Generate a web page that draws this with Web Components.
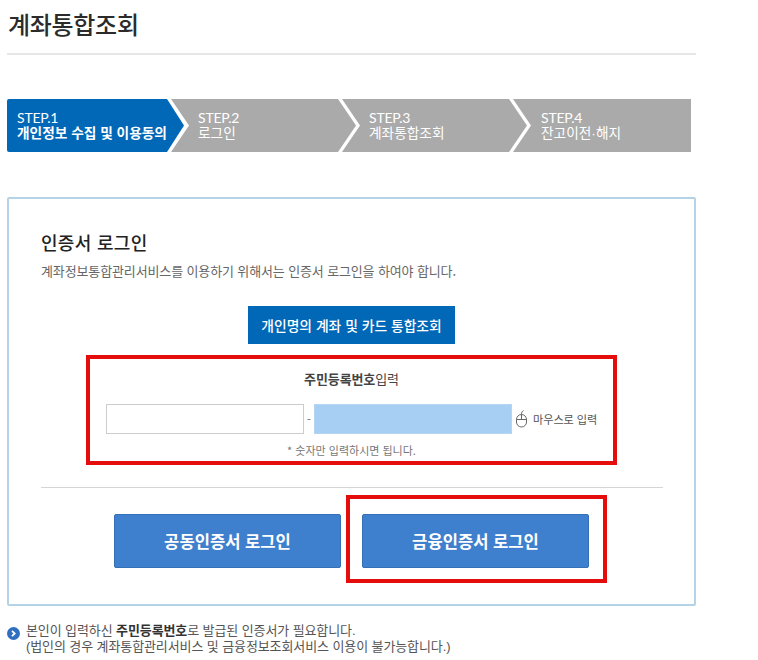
<!DOCTYPE html>
<html lang="ko">
<head>
<meta charset="utf-8">
<title>계좌통합조회</title>
<style>
html, body { margin: 0; background: #fff; }
body {
    width: 689px;
    padding: 0 0 0 7px;
    height: 660px;
    overflow: hidden;
    font-family: "Noto Sans CJK KR", "Noto Sans", sans-serif;
    color: #333;
}
</style>
</head>
<body>
<page-title>계좌통합조회</page-title>

<step-bar>
    <step-item active first num="STEP.1">개인정보 수집 및 이용동의</step-item>
    <step-item num="STEP.2">로그인</step-item>
    <step-item num="STEP.3">계좌통합조회</step-item>
    <step-item last num="STEP.4">잔고이전·해지</step-item>
</step-bar>

<login-card>
    <span slot="title">인증서 로그인</span>
    <span slot="desc">계좌정보통합관리서비스를 이용하기 위해서는 인증서 로그인을 하여야 합니다.</span>
    <span slot="lookup">개인명의 계좌 및 카드 통합조회</span>
    <id-box slot="id"></id-box>
    <auth-button slot="left">공동인증서 로그인</auth-button>
    <auth-button slot="right" marked>금융인증서 로그인</auth-button>
</login-card>

<info-note>
    본인이 입력하신 <b>주민등록번호</b>로 발급된 인증서가 필요합니다.<br>(법인의 경우 계좌통합관리서비스 및 금융정보조회서비스 이용이 불가능합니다.)
</info-note>

<script>
class PageTitle extends HTMLElement {
    constructor(){
        super();
        this.attachShadow({mode:"open"}).innerHTML = `
<style>
:host { display: block; height: 55px; box-sizing: border-box; border-bottom: 2px solid #e6e6e6; padding-left: 1px; }
h1 { margin: 0; font-size: 24px; font-weight: 500; line-height: 47px; color: #2b2b2b; letter-spacing: -.3px; }
</style>
<h1><slot></slot></h1>`;
    }
}

class StepBar extends HTMLElement {
    constructor(){
        super();
        this.attachShadow({mode:"open"}).innerHTML = `
<style>
:host { display: flex; margin-top: 44px; height: 53px; }
</style>
<slot></slot>`;
    }
}

class StepItem extends HTMLElement {
    constructor(){
        super();
        this.attachShadow({mode:"open"}).innerHTML = `
<style>
:host { display: block; height: 53px; width: 185px; margin-right: -14px; background: #aaa; color: #fff; box-sizing: border-box; padding: 11px 0 0 27px;
    clip-path: polygon(0 0, 167px 0, 185px 26.5px, 167px 100%, 0 100%, 18px 26.5px); }
:host([first]) { width: 177px; padding-left: 10px; margin-right: -13px; border-radius: 2px 0 0 2px;
    clip-path: polygon(0 0, 160px 0, 177px 26.5px, 160px 100%, 0 100%); }
:host([last]) { width: 178px; margin-right: 0; padding-left: 28px;
    clip-path: polygon(0 0, 100% 0, 100% 100%, 0 100%, 18px 26.5px); }
:host([active]) { background: #0068b7; }
div { line-height: 16px; white-space: nowrap; font-family: "Liberation Sans", "Noto Sans CJK KR", sans-serif; }
#n { font-family: Lato, "Liberation Sans", sans-serif; font-size: 14px; letter-spacing: -.2px; }
.txt { font-size: 13.7px; }
:host([active]) .txt { font-weight: 700; }
</style>
<div id="n"></div>
<div class="txt"><slot></slot></div>`;
    }
    connectedCallback(){
        this.shadowRoot.querySelector("#n").textContent = this.getAttribute("num");
    }
}

class LoginCard extends HTMLElement {
    constructor(){
        super();
        this.attachShadow({mode:"open"}).innerHTML = `
<style>
:host { display: block; margin-top: 45px; height: 409px; box-sizing: border-box; border: 2px solid #b5d3e7; border-radius: 2px; padding: 30px 31px 0 32px; }
h2 { margin: 0; font-size: 18px; line-height: 26px; font-weight: 500; color: #222; letter-spacing: .3px; }
p { margin: 7px 0 0; font-size: 13px; line-height: 18px; color: #666; letter-spacing: -.13px; white-space: nowrap; }
#lookup { display: block; width: 207px; height: 38px; margin: 26px 0 0 207px; background: #0068b7; color: #fff; font-size: 13.8px; font-weight: 500; line-height: 38px; text-align: center; white-space: nowrap; }
#idslot { margin: 11px 15px 0 14px; height: 110px; }
hr { margin: 22px 0 0; border: 0; border-top: 1px solid #d5d5d5; }
#btns { display: flex; gap: 5px; margin: 7px 0 0 73px; }
</style>
<h2><slot name="title"></slot></h2>
<p><slot name="desc"></slot></p>
<div id="lookup"><slot name="lookup"></slot></div>
<div id="idslot"><slot name="id"></slot></div>
<hr>
<div id="btns"><slot name="left"></slot><slot name="right"></slot></div>`;
    }
}

class IdBox extends HTMLElement {
    constructor(){
        super();
        this.attachShadow({mode:"open"}).innerHTML = `
<style>
:host { display: block; box-sizing: border-box; width: 531px; height: 110px; margin-left: 31px; border: 4px solid #e50c0c; padding: 11px 0 0 16px; }
.ttl { font-size: 13px; line-height: 18px; text-align: center; color: #444; padding-right: 16px; letter-spacing: -.1px; }
.ttl b { font-weight: 700; }
.row { display: flex; align-items: center; margin-top: 16px; height: 30px; }
input { box-sizing: border-box; width: 198px; height: 30px; margin: 0; padding: 0; border: 1px solid #ccc; background: #fff; outline: none; }
input.sec { width: 198px; background: #a6cff3; border-color: #b4d6f2; }
.dash { width: 10px; text-align: center; font-size: 11px; color: #666; }
svg { margin-left: 4px; flex: none; }
.mouse { margin-left: 6px; font-size: 11.2px; color: #555; white-space: nowrap; letter-spacing: -.1px; }
.hint { margin-top: 8px; padding-right: 16px; font-size: 11px; line-height: 16px; text-align: center; color: #777; }
</style>
<div class="ttl"><b>주민등록번호</b>입력</div>
<div class="row">
 <input type="text" aria-label="주민등록번호 앞자리">
 <span class="dash">-</span>
 <input class="sec" type="text" aria-label="주민등록번호 뒷자리">
 <svg width="11" height="18" viewBox="0 0 11 18" fill="none" stroke="#666" stroke-width="1"><rect x=".5" y="4.5" width="10" height="12.5" rx="5"/><path d="M.5 9.5h10M5.5 4.5v5M5.5 4.5c0-2 .3-3 2-4"/></svg>
 <span class="mouse">마우스로 입력</span>
</div>
<div class="hint">* 숫자만 입력하시면 됩니다.</div>`;
    }
}

class AuthButton extends HTMLElement {
    constructor(){
        super();
        this.attachShadow({mode:"open"}).innerHTML = `
<style>
:host { display: block; box-sizing: border-box; width: 227px; padding: 19px 0; }
:host([marked]) { width: 261px; padding: 15px 14px 15px 12px; border: 4px solid #e50c0c; height: 88px; }
div { box-sizing: border-box; height: 54px; background: #3e80cd; border: 1px solid #3470b6; border-radius: 2px; color: #fff; font-size: 16.6px; font-weight: 700; line-height: 52px; text-align: center; white-space: nowrap; }
</style>
<div><slot></slot></div>`;
    }
}

class InfoNote extends HTMLElement {
    constructor(){
        super();
        this.attachShadow({mode:"open"}).innerHTML = `
<style>
:host { display: flex; margin-top: 17px; font-family: "Liberation Sans", "Noto Sans CJK KR", sans-serif; font-size: 13px; line-height: 16px; color: #555; letter-spacing: -.1px; white-space: nowrap; }
svg { flex: none; margin: 4px 6px 0 0; }
::slotted(b) { color: #333; font-weight: 700; }
</style>
<svg width="13" height="13" viewBox="0 0 13 13"><circle cx="6.5" cy="6.5" r="6.5" fill="#2f6fc0"/><path d="M5 3.8 7.7 6.5 5 9.2" fill="none" stroke="#fff" stroke-width="1.8"/></svg>
<div><slot></slot></div>`;
    }
}

customElements.define("page-title", PageTitle);
customElements.define("step-bar", StepBar);
customElements.define("step-item", StepItem);
customElements.define("login-card", LoginCard);
customElements.define("id-box", IdBox);
customElements.define("auth-button", AuthButton);
customElements.define("info-note", InfoNote);
</script>
</body>
</html>
